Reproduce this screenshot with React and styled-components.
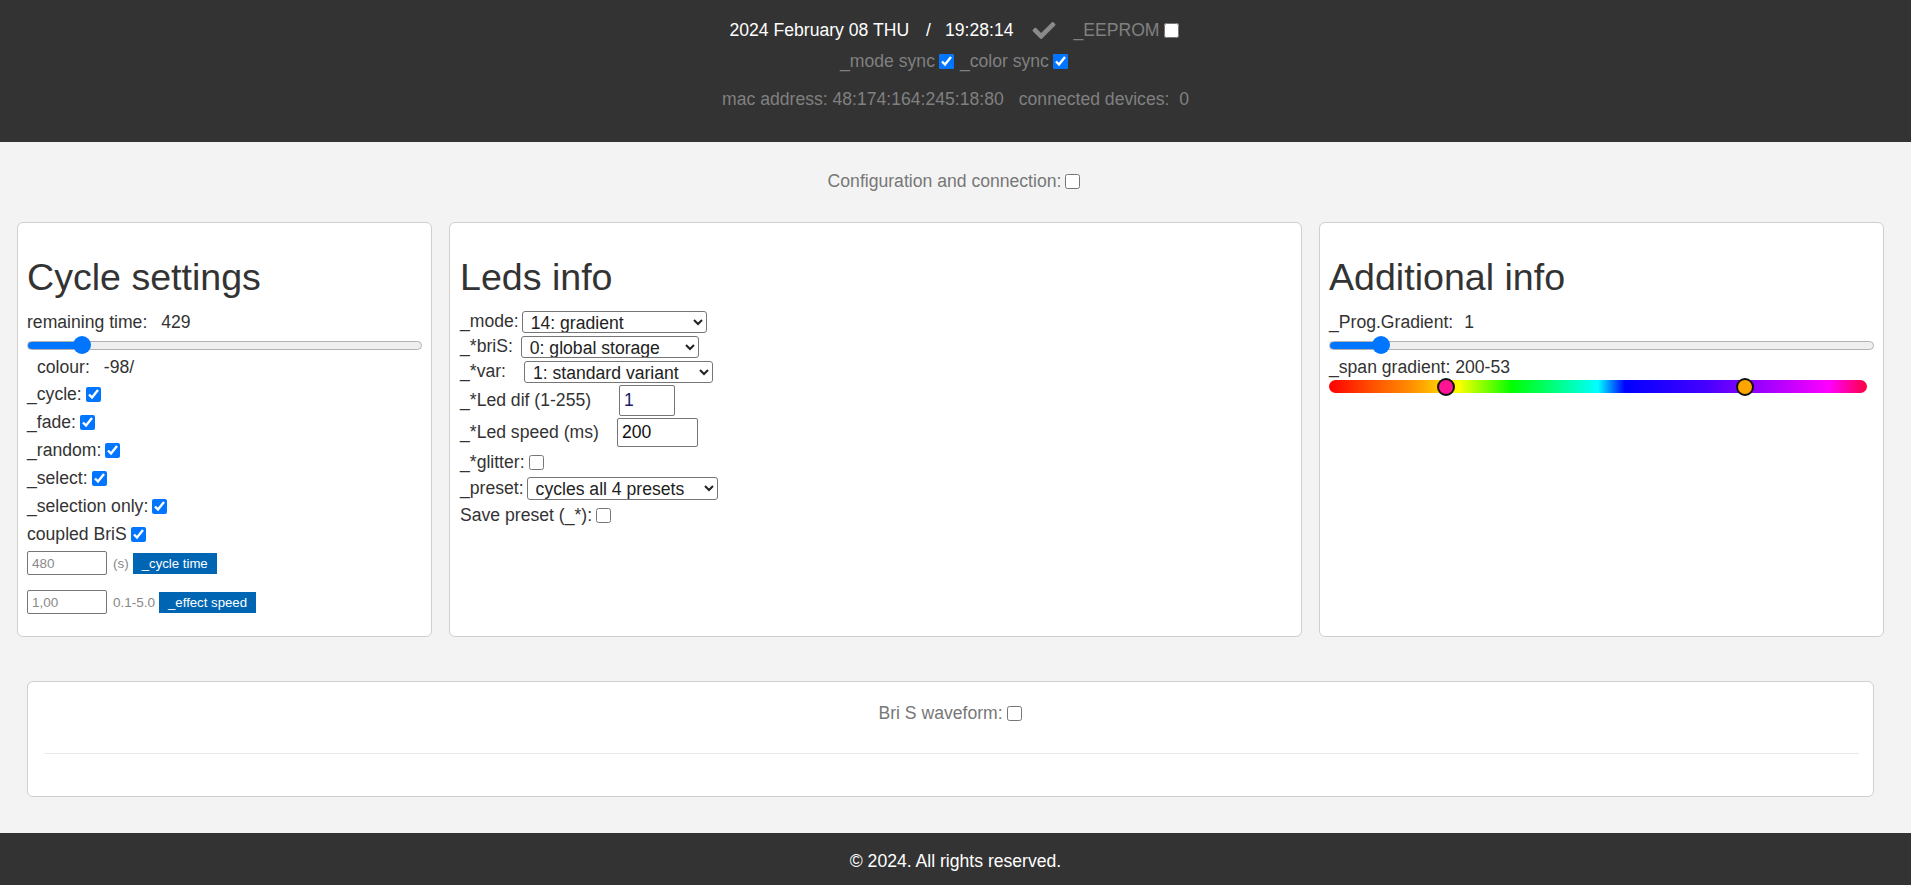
import styled, { createGlobalStyle } from "styled-components";
import { FaCheck } from "react-icons/fa";

const GlobalStyle = createGlobalStyle`
  html, body { margin: 0; padding: 0; }
  body {
    font-family: "Liberation Sans", Arial, sans-serif;
    font-size: 17.6px;
    color: #333;
    background: #f3f3f3;
  }
`

const Header = styled.header`
  background: #333;
  height: 142px;
  box-sizing: border-box;
  padding-top: 16px;
  display: flex;
  flex-direction: column;
  align-items: center;
`

const HeadRow = styled.div`
  display: flex;
  align-items: center;
  justify-content: center;
  height: ${p => p.$h}px;
  white-space: nowrap;
`

const Bright = styled.span`
  color: #fff;
  margin: ${p => p.$m || "0"};
`

const Dim = styled.span`
  color: #808080;
  margin-left: ${p => p.$ml || 0}px;
`

const SavedIcon = styled(FaCheck)`
  color: #8a8a8a;
  width: 26px;
  height: 23px;
  margin: 0 16px 0 18px;
`

const Check = styled.input.attrs({ type: "checkbox" })`
  width: 15px;
  height: 15px;
  margin: 0 3px 0 4px;
`

const ConfigRow = styled.div`
  display: flex;
  align-items: center;
  justify-content: center;
  height: 26px;
  margin-top: 26px;
  color: #777;
`

const CardGrid = styled.div`
  display: grid;
  grid-template-columns: 415px 853px 565px;
  column-gap: 17px;
  margin: 28px 0 0 17px;
`

const Card = styled.section`
  background: #fff;
  border: 1px solid #cfcfcf;
  border-radius: 6px;
  height: 415px;
  box-sizing: border-box;
  padding: 32px 9px 0 ${p => p.$pl || 9}px;
`

const Title = styled.h2`
  font-size: 37.6px;
  line-height: 44px;
  font-weight: 400;
  margin: 0 0 10px;
  color: #333;
`

const Row = styled.div`
  display: flex;
  align-items: center;
  height: ${p => p.$h || 26}px;
  margin-top: ${p => p.$mt || 0}px;
  white-space: nowrap;
`

const Value = styled.span`
  margin-left: ${p => p.$ml || 0}px;
`

const Indent = styled.span`
  margin-left: 10px;
`

const Range = styled.input.attrs({ type: "range", min: 0, max: 100 })`
  -webkit-appearance: none;
  appearance: none;
  display: block;
  width: 100%;
  height: 18px;
  margin: 0;
  background: transparent;

  &::-webkit-slider-runnable-track {
    height: 9px;
    box-sizing: border-box;
    border-radius: 5px;
    border: 1px solid #b2b2b2;
    background: linear-gradient(to right, #0075ff ${p => p.$pct}%, #efefef ${p => p.$pct}%);
  }

  &::-webkit-slider-thumb {
    -webkit-appearance: none;
    width: 18px;
    height: 18px;
    border-radius: 50%;
    background: #0075ff;
    border: none;
    margin-top: -5.5px;
  }
`

const SmallInput = styled.input`
  width: 80px;
  height: 24px;
  box-sizing: border-box;
  border: 1px solid #767676;
  border-radius: 2px;
  padding: 0 4px;
  margin: 0;
  font-family: inherit;
  font-size: 13.5px;

  &::placeholder { color: #8a8a8a; }
`

const Hint = styled.span`
  font-size: 13.5px;
  color: #888;
  margin: 0 4px 0 6px;
`

const Button = styled.button`
  height: 21px;
  padding: 0 9px;
  border: none;
  border-radius: 0;
  background: #0066b3;
  color: #fff;
  font-family: inherit;
  font-size: 13.2px;
`

const Select = styled.select`
  font-family: inherit;
  font-size: 17.6px;
  color: #222;
  height: ${p => p.$h || 22}px;
  width: ${p => p.$w}px;
  margin-left: ${p => p.$ml}px;
  border: 1px solid #767676;
  border-radius: 3px;
  background: #fff;
  padding: 0 0 0 4px;
  box-sizing: border-box;
`

const NumInput = styled.input`
  font-family: inherit;
  font-size: 17.6px;
  color: ${p => p.$color || "#111"};
  width: ${p => p.$w}px;
  height: ${p => p.$h}px;
  margin: 0 0 0 ${p => p.$ml}px;
  box-sizing: border-box;
  border: 1px solid #767676;
  border-radius: 2px;
  padding: 0 4px;
`

const SpanBar = styled.div`
  position: relative;
  width: 538px;
  height: 13px;
  border-radius: 7px;
  background: linear-gradient(to right,
    #ff0000 0%, #ff5000 8%, #ff8c00 15%, #ffd000 21%, #ffff00 24%,
    #80ff00 29%, #00ff00 34%, #00ff80 42%, #00ffff 50%, #0000ff 55%,
    #2000ff 62%, #4400ff 70%, #8800ff 78%, #c000ff 85%, #ff00ff 93%, #ff0040 100%);
`

const Knob = styled.span`
  position: absolute;
  top: 50%;
  width: 18px;
  height: 18px;
  box-sizing: border-box;
  border: 2px solid #111;
  border-radius: 50%;
  background: ${p => p.$color};
  transform: translate(-50%, -50%);
`

const WaveCard = styled.section`
  margin: 44px 37px 0 27px;
  height: 116px;
  box-sizing: border-box;
  background: #fff;
  border: 1px solid #cfcfcf;
  border-radius: 6px;
  padding: 18px 14px 0 16px;
`

const CenterRow = styled(Row)`
  justify-content: center;
  color: #777;
`

const Divider = styled.div`
  margin-top: 27px;
  border-top: 1px solid #eaeaea;
`

const Footer = styled.footer`
  margin-top: 36px;
  height: 52px;
  box-sizing: border-box;
  padding-top: 5px;
  background: #333;
  color: #fff;
  display: flex;
  align-items: center;
  justify-content: center;
`

const cycleFlags = ["_cycle:", "_fade:", "_random:", "_select:", "_selection only:", "coupled BriS"]

export default function App() {
  return (
    <>
      <GlobalStyle />
      <Header>
        <HeadRow $h={28}>
          <Bright>2024 February 08 THU</Bright>
          <Bright $m="0 14px 0 17px">/</Bright>
          <Bright>19:28:14</Bright>
          <SavedIcon />
          <Dim>_EEPROM</Dim>
          <Check />
        </HeadRow>
        <HeadRow $h={34}>
          <Dim>_mode sync</Dim>
          <Check defaultChecked />
          <Dim $ml={3}>_color sync</Dim>
          <Check defaultChecked />
        </HeadRow>
        <HeadRow $h={42}>
          <Dim>mac address: 48:174:164:245:18:80</Dim>
          <Dim $ml={15}>connected devices:&nbsp; 0</Dim>
        </HeadRow>
      </Header>

      <ConfigRow>
        Configuration and connection:<Check />
      </ConfigRow>

      <CardGrid>
        <Card>
          <Title>Cycle settings</Title>
          <Row $h={27}>remaining time:<Value $ml={14}>429</Value></Row>
          <Range $pct={13} defaultValue={12} />
          <Row><Indent>colour:</Indent><Value $ml={14}>-98/</Value></Row>
          {cycleFlags.map(label => (
            <Row key={label} $h={28}>
              {label}<Check defaultChecked />
            </Row>
          ))}
          <Row $h={24} $mt={3}>
            <SmallInput placeholder="480" />
            <Hint>(s)</Hint>
            <Button>_cycle time</Button>
          </Row>
          <Row $h={24} $mt={15}>
            <SmallInput placeholder="1,00" />
            <Hint>0.1-5.0</Hint>
            <Button>_effect speed</Button>
          </Row>
        </Card>

        <Card $pl={10}>
          <Title>Leds info</Title>
          <Row $h={25}>
            _mode:
            <Select $w={185} $ml={3} defaultValue="14">
              <option value="14">14: gradient</option>
            </Select>
          </Row>
          <Row $h={25}>
            _*briS:
            <Select $w={178} $ml={8} defaultValue="0">
              <option value="0">0: global storage</option>
            </Select>
          </Row>
          <Row $h={25}>
            _*var:
            <Select $w={189} $ml={18} defaultValue="1">
              <option value="1">1: standard variant</option>
            </Select>
          </Row>
          <Row $h={32}>
            _*Led dif (1-255)
            <NumInput $w={56} $h={31} $ml={28} $color="#1a1a6e" defaultValue="1" />
          </Row>
          <Row $h={32}>
            _*Led speed (ms)
            <NumInput $w={81} $h={29} $ml={18} defaultValue="200" />
          </Row>
          <Row $h={28.5}>
            _*glitter:<Check />
          </Row>
          <Row $h={24}>
            _preset:
            <Select $w={191} $h={23} $ml={3} defaultValue="all">
              <option value="all">cycles all 4 presets</option>
            </Select>
          </Row>
          <Row $h={28} $mt={1}>
            Save preset (_*):<Check />
          </Row>
        </Card>

        <Card>
          <Title>Additional info</Title>
          <Row $h={27}>_Prog.Gradient:<Value $ml={11}>1</Value></Row>
          <Range $pct={9} defaultValue={8} />
          <Row>_span gradient: 200-53</Row>
          <SpanBar>
            <Knob $color="#ff1493" style={{ left: "21.8%" }} />
            <Knob $color="#ffa500" style={{ left: "77.3%" }} />
          </SpanBar>
        </Card>
      </CardGrid>

      <WaveCard>
        <CenterRow>
          Bri S waveform:<Check />
        </CenterRow>
        <Divider />
      </WaveCard>

      <Footer>© 2024. All rights reserved.</Footer>
    </>
  )
}
